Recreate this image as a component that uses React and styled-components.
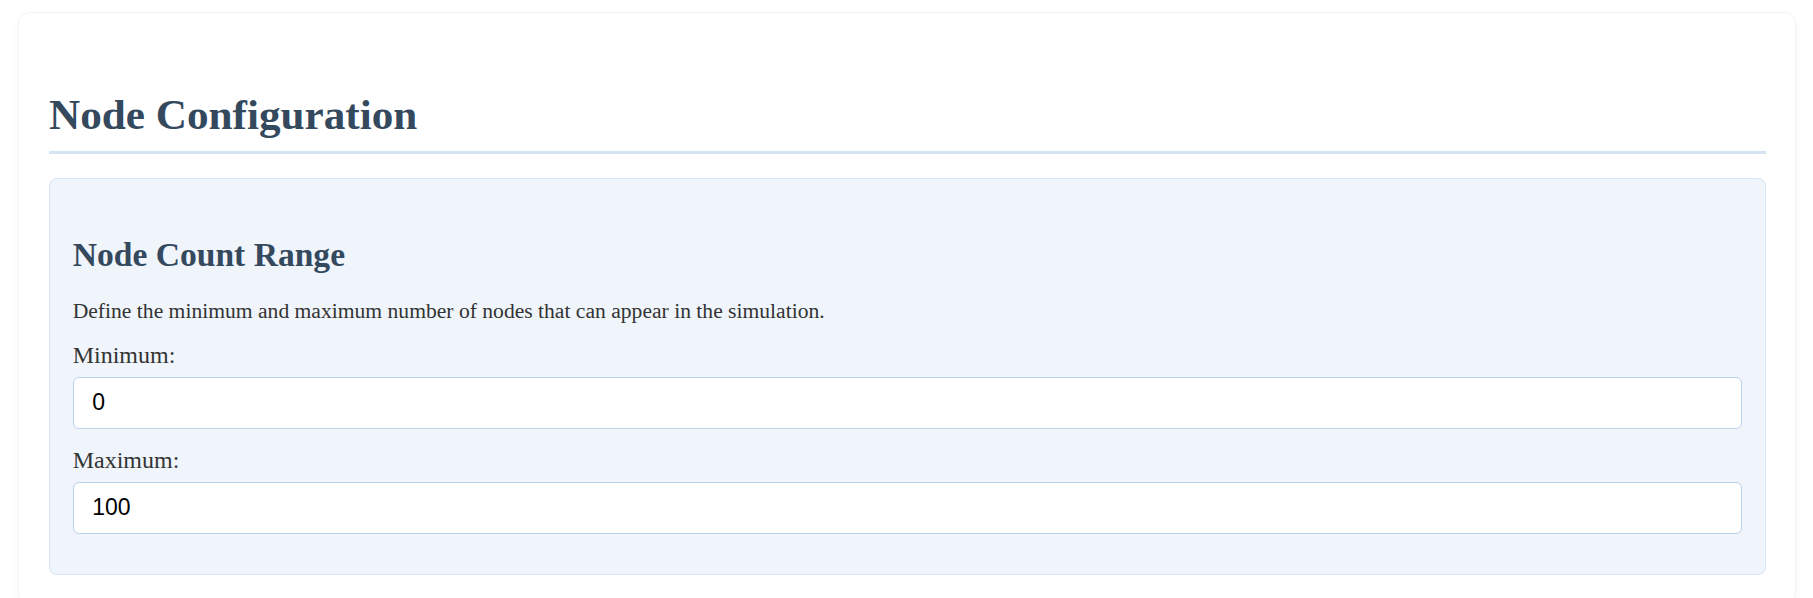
import React from "react";
import styled, { createGlobalStyle } from "styled-components";

const GlobalStyle = createGlobalStyle`
  html, body {
    margin: 0;
    padding: 0;
    background: #ffffff;
  }
  body {
    font-family: "Liberation Serif", "Times New Roman", serif;
  }
  * { box-sizing: border-box; }
`;

const Page = styled.div`
  padding: 12px 17px 0 18px;
`;

const Card = styled.div`
  background: #ffffff;
  border: 1px solid #f3f4f6;
  border-radius: 12px;
  box-shadow: 0 2px 10px rgba(0, 0, 0, 0.035);
  padding: 76.9px 29px 30px 30px;
`;

const Title = styled.h1`
  margin: 0;
  font-size: 43.2px;
  line-height: 49.6px;
  font-weight: 700;
  color: #34495e;
  padding-bottom: 11.5px;
  border-bottom: 3px solid #d5e3f2;
`;

const Section = styled.section`
  margin-top: 24px;
  background: #f0f5fc;
  border: 1px solid #d6e6f5;
  border-radius: 8px;
  padding: 57.5px 22.7px 39.7px;
`;

const SectionTitle = styled.h2`
  margin: 0;
  font-size: 33.6px;
  line-height: 38.6px;
  font-weight: 700;
  color: #34495e;
`;

const Description = styled.p`
  margin: 23.9px 0 0;
  font-size: 21.6px;
  line-height: 24.8px;
  color: #333333;
`;

const Field = styled.div`
  margin-top: ${(p) => p.$gap}px;
`;

const Label = styled.label`
  display: block;
  font-size: 24px;
  line-height: 27.6px;
  color: #333333;
  margin-bottom: 6.7px;
`;

const Input = styled.input`
  display: block;
  width: 100%;
  height: 52.7px;
  margin: 0;
  padding: 0 18.5px;
  background: #ffffff;
  border: 1px solid #b9d1ea;
  border-radius: 6px;
  font-family: "Liberation Sans", Arial, sans-serif;
  font-size: 23px;
  color: #000000;
  outline: none;
`;

export default function App() {
  return (
    <>
      <GlobalStyle />
      <Page>
        <Card>
          <Title>Node Configuration</Title>
          <Section>
            <SectionTitle>Node Count Range</SectionTitle>
            <Description>
              Define the minimum and maximum number of nodes that can appear in the simulation.
            </Description>
            <Field $gap={18.6}>
              <Label htmlFor="min">Minimum:</Label>
              <Input id="min" type="number" defaultValue="0" />
            </Field>
            <Field $gap={18}>
              <Label htmlFor="max">Maximum:</Label>
              <Input id="max" type="number" defaultValue="100" />
            </Field>
          </Section>
        </Card>
      </Page>
    </>
  );
}
